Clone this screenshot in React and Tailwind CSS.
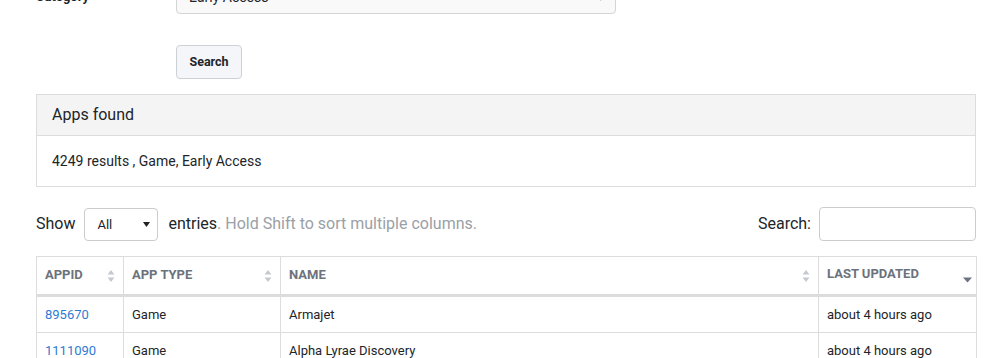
import React from 'react';

const SortBoth = () => (
  <svg width="8" height="14" viewBox="0 0 8 14" className="shrink-0">
    <path d="M4 1 L7.5 5.5 L0.5 5.5 Z" fill="#c5c9cf" />
    <path d="M4 13 L7.5 8.5 L0.5 8.5 Z" fill="#c5c9cf" />
  </svg>
);

const SortDesc = () => (
  <svg width="9" height="6" viewBox="0 0 9 6" className="shrink-0">
    <path d="M0 0.5 L9 0.5 L4.5 5.5 Z" fill="#6b7280" />
  </svg>
);

const rows = [
  { id: '895670', type: 'Game', name: 'Armajet', updated: 'about 4 hours ago' },
  { id: '1111090', type: 'Game', name: 'Alpha Lyrae Discovery', updated: 'about 4 hours ago' },
];

const App = () => {
  return (
    <div className="h-[358px] overflow-hidden bg-white font-['Roboto',sans-serif] text-[#212529]">
      <div className="ml-[36px] w-[940px] -mt-[20px]">
        {/* category row */}
        <div className="flex items-center">
          <label className="w-[140px] text-[13px] font-bold">Category</label>
          <div className="flex h-[34px] w-[440px] items-center justify-between rounded border border-[#d4d4d4] bg-[#f9f9f9] px-[12px] text-[14px]">
            <span>Early Access</span>
            <span className="text-[10px] text-[#999]">▾</span>
          </div>
        </div>

        <div className="mt-[31px] pl-[140px]">
          <button className="h-[34px] w-[66px] rounded border border-[#cdd1d6] bg-[#f4f6f9] text-[12.5px] font-bold text-[#212529]">
            Search
          </button>
        </div>

        {/* results card */}
        <div className="mt-[15px] border border-[#dcdcdc]">
          <div className="flex h-[41px] items-center border-b border-[#dcdcdc] bg-[#f4f4f4] px-[15px] text-[16px]">
            Apps found
          </div>
          <div className="flex h-[50px] items-center px-[15px] text-[14px]">
            4249 results , Game, Early Access
          </div>
        </div>

        {/* table controls */}
        <div className="mt-[20px] flex items-center justify-between">
          <div className="flex items-center text-[16px]">
            <span>Show</span>
            <div className="ml-[9px] flex h-[33px] w-[74px] items-center justify-between rounded border border-[#ccc] bg-white pl-[12px] pr-[7px] text-[13px]">
              <span className="pt-[2px]">All</span>
              <svg width="7" height="5" viewBox="0 0 7 5">
                <path d="M0 0 L7 0 L3.5 5 Z" fill="#222" />
              </svg>
            </div>
            <span className="ml-[10px]">
              entries<span className="text-[#9aa0a6]">. Hold Shift to sort multiple columns.</span>
            </span>
          </div>
          <div className="flex items-center text-[16px]">
            <span>Search:</span>
            <div className="ml-[8px] h-[34px] w-[157px] rounded border border-[#ccc] bg-white" />
          </div>
        </div>

        {/* table */}
        <table className="mt-[15px] w-[940px] table-fixed border-collapse text-[13px]">
          <colgroup>
            <col className="w-[87px]" />
            <col className="w-[157px]" />
            <col className="w-[538px]" />
            <col className="w-[158px]" />
          </colgroup>
          <thead>
            <tr className="h-[39px] text-left text-[13px] font-bold uppercase text-[#6c727c]">
              <th className="border border-b-[3px] border-[#dcdcdc] px-[8px]">
                <div className="flex items-center justify-between">
                  <span className="-mt-[1px]">AppID</span>
                  <SortBoth />
                </div>
              </th>
              <th className="border border-b-[3px] border-[#dcdcdc] px-[8px]">
                <div className="flex items-center justify-between">
                  <span className="-mt-[1px]">App Type</span>
                  <SortBoth />
                </div>
              </th>
              <th className="border border-b-[3px] border-[#dcdcdc] px-[8px]">
                <div className="flex items-center justify-between">
                  <span className="-mt-[1px]">Name</span>
                  <SortBoth />
                </div>
              </th>
              <th className="border border-b-[3px] border-[#dcdcdc] pl-[8px] pr-[4px]">
                <div className="flex items-center justify-between">
                  <span className="-mt-[3px]">Last Updated</span>
                  <span className="mt-[9px]">
                    <SortDesc />
                  </span>
                </div>
              </th>
            </tr>
          </thead>
          <tbody>
            {rows.map(r => (
              <tr key={r.id} className="h-[37px]">
                <td className="border border-[#dcdcdc] px-[8px] text-[#2f7bd3]">{r.id}</td>
                <td className="border border-[#dcdcdc] px-[8px]">{r.type}</td>
                <td className="border border-[#dcdcdc] px-[8px]">{r.name}</td>
                <td className="border border-[#dcdcdc] px-[8px]">{r.updated}</td>
              </tr>
            ))}
          </tbody>
        </table>
      </div>
    </div>
  );
};

export default App;
